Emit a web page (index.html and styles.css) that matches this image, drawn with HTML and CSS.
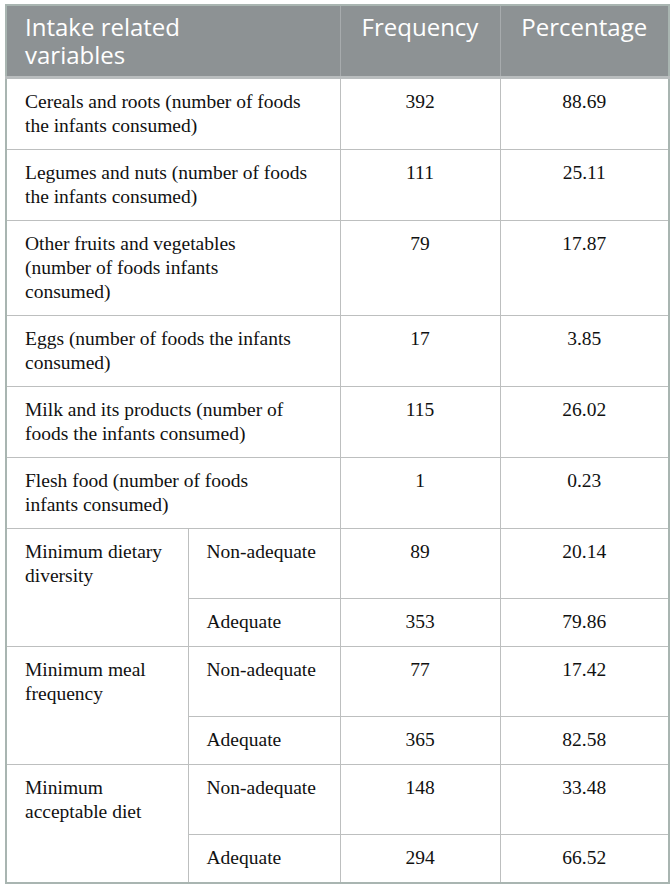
FILE: index.html
```html
<!DOCTYPE html>
<html lang="en">
<head>
  <meta charset="UTF-8">
  <title>Intake related variables</title>
  <link rel="stylesheet" href="styles.css">
</head>
<body>
  <table class="intake">
    <colgroup>
      <col class="c-var">
      <col class="c-sub">
      <col class="c-freq">
      <col class="c-pct">
    </colgroup>
    <thead>
      <tr>
        <th colspan="2" class="left">Intake related<br>variables</th>
        <th>Frequency</th>
        <th>Percentage</th>
      </tr>
    </thead>
    <tbody>
      <tr class="r2">
        <td colspan="2">Cereals and roots (number of foods the infants consumed)</td>
        <td class="num">392</td>
        <td class="num">88.69</td>
      </tr>
      <tr class="r2">
        <td colspan="2">Legumes and nuts (number of foods the infants consumed)</td>
        <td class="num">111</td>
        <td class="num">25.11</td>
      </tr>
      <tr>
        <td colspan="2">Other fruits and vegetables<br>(number of foods infants<br>consumed)</td>
        <td class="num">79</td>
        <td class="num">17.87</td>
      </tr>
      <tr class="r2">
        <td colspan="2">Eggs (number of foods the infants consumed)</td>
        <td class="num">17</td>
        <td class="num">3.85</td>
      </tr>
      <tr class="r2">
        <td colspan="2">Milk and its products (number of foods the infants consumed)</td>
        <td class="num">115</td>
        <td class="num">26.02</td>
      </tr>
      <tr class="r2">
        <td colspan="2">Flesh food (number of foods<br>infants consumed)</td>
        <td class="num">1</td>
        <td class="num">0.23</td>
      </tr>
      <tr class="sub-top">
        <td rowspan="2">Minimum dietary diversity</td>
        <td>Non-adequate</td>
        <td class="num">89</td>
        <td class="num">20.14</td>
      </tr>
      <tr class="sub-bottom">
        <td>Adequate</td>
        <td class="num">353</td>
        <td class="num">79.86</td>
      </tr>
      <tr class="sub-top">
        <td rowspan="2">Minimum meal<br>frequency</td>
        <td>Non-adequate</td>
        <td class="num">77</td>
        <td class="num">17.42</td>
      </tr>
      <tr class="sub-bottom">
        <td>Adequate</td>
        <td class="num">365</td>
        <td class="num">82.58</td>
      </tr>
      <tr class="sub-top">
        <td rowspan="2">Minimum<br>acceptable diet</td>
        <td>Non-adequate</td>
        <td class="num">148</td>
        <td class="num">33.48</td>
      </tr>
      <tr class="sub-bottom">
        <td>Adequate</td>
        <td class="num">294</td>
        <td class="num">66.52</td>
      </tr>
    </tbody>
  </table>
</body>
</html>
```

FILE: styles.css
```css
body {
  margin: 0;
  padding: 4px 0 0 5px;
  background: #fff;
}
.intake {
  border-collapse: collapse;
  table-layout: fixed;
  width: 663px;
  border: 2px solid #a9b5b1;
  font-family: 'Liberation Serif', 'Times New Roman', serif;
  font-size: 19.5px;
  color: #111;
}
.c-var { width: 182px; }
.c-sub { width: 152px; }
.c-freq { width: 160px; }
.c-pct { width: 169px; }
.intake th {
  background: #8d9294;
  color: #fff;
  font-family: 'Open Sans', 'Noto Sans', sans-serif;
  font-size: 24px;
  font-weight: normal;
  line-height: 28px;
  height: 72px;
  padding: 7px 18px 0 18px;
  vertical-align: top;
  box-sizing: border-box;
  text-align: center;
  border-left: 1px solid #a7abad;
  border-bottom: 3px solid #b9bdbe;
}
.intake th.left {
  text-align: left;
  border-left: none;
}
.intake td {
  line-height: 24px;
  padding: 11px 18px 11px 18px;
  vertical-align: top;
  border: 1px solid #bdbfbf;
}
.intake td.num {
  text-align: center;
}
.r2 td {
  height: 48px;
}
.sub-top td {
  height: 47px;
}
.sub-bottom td {
  height: 25px;
}
```
